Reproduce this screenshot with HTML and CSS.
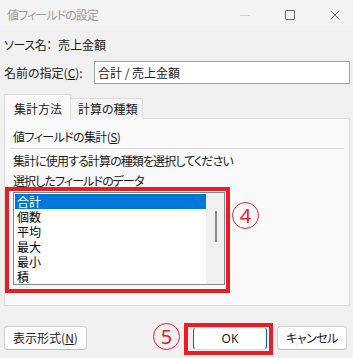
FILE: index.html
```html
<!DOCTYPE html>
<html lang="ja">
<head>
<meta charset="utf-8">
<link rel="stylesheet" href="styles.css">
</head>
<body>
<div class="window">
  <div class="titlebar">
    <div class="title">値フィールドの設定</div>
    <div class="controls">
      <div class="ctl"><span class="min"></span></div>
      <div class="ctl"><span class="max"></span></div>
      <div class="ctl">
        <svg width="10" height="10" viewBox="0 0 10 10"><path d="M0.5 0.5 L9.5 9.5 M9.5 0.5 L0.5 9.5" stroke="#6b6b6b" stroke-width="1" fill="none"/></svg>
      </div>
    </div>
  </div>
  <div class="content">
    <div class="source"><span class="srclabel">ソース名：</span><span>売上金額</span></div>
    <div class="namerow">
      <span class="namelabel">名前の指定(<u>C</u>):</span>
      <div class="input">合計 / 売上金額</div>
    </div>
    <div class="tabs">
      <div class="tab active">集計方法</div>
      <div class="tab">計算の種類</div>
    </div>
    <div class="panel">
      <div class="group">値フィールドの集計(<u>S</u>)</div>
      <div class="sep"></div>
      <div class="line1">集計に使用する計算の種類を選択してください</div>
      <div class="line2">選択したフィールドのデータ</div>
      <div class="listrow">
        <div class="redbox">
          <div class="listbox">
            <div class="items">
              <div class="item selected">合計</div>
              <div class="item">個数</div>
              <div class="item">平均</div>
              <div class="item">最大</div>
              <div class="item">最小</div>
              <div class="item">積</div>
            </div>
            <div class="scroll"><div class="thumb"></div></div>
          </div>
        </div>
        <div class="circle c4">4</div>
      </div>
    </div>
    <div class="buttons">
      <div class="btn fmt">表示形式(<u>N</u>)</div>
      <div class="spacer"></div>
      <div class="circle c5">5</div>
      <div class="redbtn"><div class="btn ok">OK</div></div>
      <div class="btn cancel">キャンセル</div>
    </div>
  </div>
</div>
</body>
</html>
```
FILE: styles.css
```css
html, body {
  margin: 0;
  padding: 0;
  width: 353px;
  height: 358px;
  overflow: hidden;
  background: #f0f0f0;
}
.window {
  font-family: "Noto Sans CJK JP", "Noto Sans", sans-serif;
  font-feature-settings: "palt";
  font-size: 12px;
  color: #1a1a1a;
  display: flex;
  flex-direction: column;
  width: 353px;
  height: 358px;
}
u { text-decoration: underline; text-underline-offset: 1px; }
.titlebar {
  height: 30px;
  display: flex;
  align-items: center;
  background: #f3f3f3;
}
.title {
  padding-left: 7px;
  color: #9a9a9a;
  font-size: 12px;
  line-height: 16px;
  letter-spacing: -0.9px;
  flex: 1;
}
.controls {
  display: flex;
  margin-right: -4px;
  height: 30px;
}
.ctl {
  width: 45px;
  height: 30px;
  display: flex;
  align-items: center;
  justify-content: center;
}
.min {
  width: 10px;
  height: 1px;
  background: #d0d0d0;
}
.max {
  width: 8px;
  height: 8px;
  border: 1px solid #6b6b6b;
  border-radius: 1px;
}
.content {
  padding: 0 3px 0 4px;
  display: flex;
  flex-direction: column;
}
.source {
  margin-top: 7px;
  line-height: 16px;
  height: 16px;
  display: flex;
}
.srclabel { margin-right: 6px; letter-spacing: -0.4px; }
.namerow {
  margin-top: 8px;
  display: flex;
  align-items: center;
  height: 23px;
}
.namelabel {
  width: 90px;
  line-height: 16px;
  white-space: nowrap;
}
.input {
  flex: 1;
  height: 21px;
  border: 1px solid #a2a2a2;
  background: #fff;
  line-height: 21px;
  padding-left: 3px;
}
.tabs {
  margin-top: 10px;
  display: flex;
  align-items: flex-end;
  height: 25px;
  margin-bottom: -1px;
  position: relative;
  z-index: 1;
}
.tab {
  box-sizing: border-box;
  height: 21px;
  width: 73px;
  border: 1px solid #dcdcdc;
  border-bottom: none;
  background: #f4f4f4;
  line-height: 20px;
  padding-left: 7px;
  margin-left: -1px;
  white-space: nowrap;
}
.tab.active {
  height: 25px;
  width: 67px;
  line-height: 27px;
  background: #f9f9f9;
  margin-left: 0;
  padding-left: 9px;
}
.panel {
  width: 344px;
  height: 186px;
  border: 1px solid #dcdcdc;
  background: #f9f9f9;
  display: flex;
  flex-direction: column;
}
.group {
  margin-top: 10px;
  padding-left: 8px;
  line-height: 16px;
  height: 16px;
  letter-spacing: -0.6px;
}
.sep {
  margin: 3px 5px 0 5px;
  height: 1px;
  background: #dcdcdc;
}
.line1 {
  margin-top: 5px;
  padding-left: 8px;
  line-height: 14px;
  height: 14px;
  letter-spacing: -0.9px;
  white-space: nowrap;
}
.line2 {
  margin-top: 6px;
  padding-left: 8px;
  line-height: 14px;
  height: 13px;
  letter-spacing: -0.9px;
  white-space: nowrap;
}
.listrow {
  display: flex;
  align-items: flex-start;
}
.redbox {
  border: 4px solid #ec1c24;
  padding: 1px 1px 4px 4px;
}
.listbox {
  border: 1px solid #828790;
  background: #fff;
  display: flex;
  width: 210px;
  height: 91px;
}
.items {
  padding: 1px 0 0 1px;
  width: 191px;
  overflow: hidden;
}
.item {
  height: 15px;
  line-height: 15px;
  padding-left: 2px;
  color: #000;
}
.item.selected {
  background: #0078d7;
  color: #fff;
}
.scroll {
  width: 18px;
  background: #f0f0f0;
  display: flex;
  justify-content: center;
}
.thumb {
  margin-top: 18px;
  width: 2px;
  height: 31px;
  background: #8a8a8a;
  margin-left: 1px;
}
.circle {
  width: 25px;
  height: 25px;
  border: 1.5px solid #e8202a;
  border-radius: 50%;
  color: #e8202a;
  font-family: "Noto Sans", sans-serif;
  font-size: 20px;
  line-height: 25px;
  text-align: center;
  flex: none;
}
.c4 {
  margin-left: 2px;
  margin-top: 15px;
}
.buttons {
  margin-top: 17px;
  display: flex;
  align-items: flex-start;
  padding-right: 3px;
}
.btn {
  height: 22px;
  border: 1px solid #d0d0d0;
  border-bottom-color: #bcbcbc;
  border-radius: 4px;
  background: #fdfdfd;
  line-height: 22px;
  text-align: center;
  box-sizing: content-box;
  white-space: nowrap;
}
.fmt {
  margin-top: 3px;
  width: 81px;
}
.spacer { flex: 1; }
.c5 {
  margin-right: 4px;
}
.redbtn {
  border: 4px solid #ec1c24;
  padding: 0 2px 1px 5px;
}
.ok {
  width: 72px;
  height: 21px;
  line-height: 21px;
  border: 1px solid #c8d6e8;
  border-left-color: #0067c0;
  border-right-color: #0067c0;
  font-family: "Noto Sans", sans-serif;
  background: #fff;
}
.cancel {
  margin-left: 4px;
  margin-top: 3px;
  width: 68px;
  letter-spacing: -0.5px;
}
```
